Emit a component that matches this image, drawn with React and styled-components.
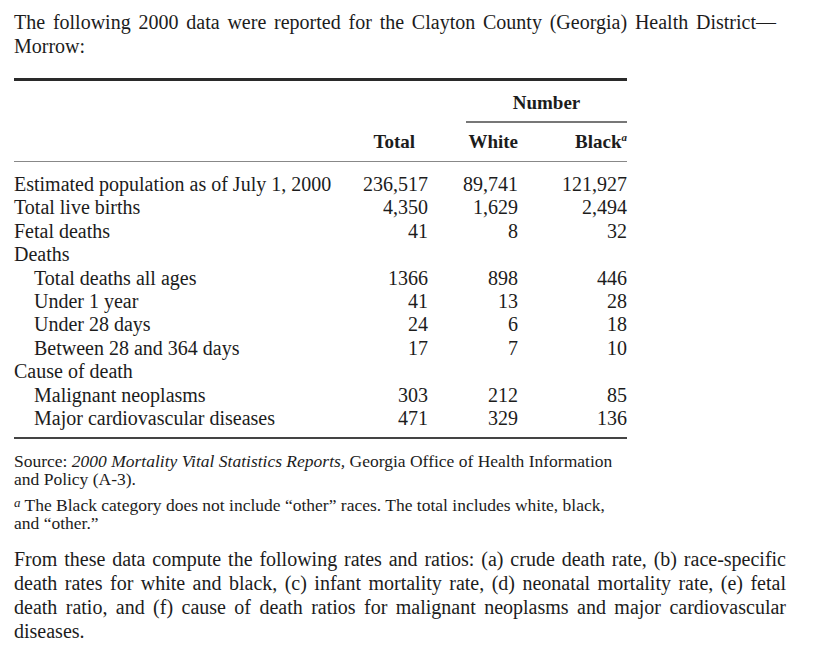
import styled, { createGlobalStyle } from 'styled-components';

const GlobalStyle = createGlobalStyle`
  body {
    margin: 0;
    background: #fff;
    color: #1c1c1c;
    font-family: "Liberation Serif", "Times New Roman", serif;
  }
`

const Page = styled.div`
  padding: 10px 0 0 14px;
  width: 814px;
  box-sizing: border-box;
`

const Paragraph = styled.div`
  width: ${props => props.width}px;
  margin-top: ${props => props.top || 0}px;
  font-size: 20px;
  line-height: 24px;
`

const Line = styled.span`
  display: block;
  text-align: ${props => (props.last ? 'left' : 'justify')};
  text-align-last: ${props => (props.last ? 'left' : 'justify')};
`

const TableBox = styled.div`
  width: 613px;
  margin-top: 20px;
  border-top: 3px solid #2a2a2a;
`

const DataTable = styled.table`
  width: 100%;
  border-collapse: collapse;
  table-layout: fixed;
  font-size: 20px;

  td, th {
    padding: 0;
  }
`

const GroupHead = styled.th`
  font-weight: bold;
  font-size: 19px;
  text-align: center;
`

const GroupLabel = styled.div`
  margin-left: 38px;
  padding: 12px 0 8px 0;
  line-height: 20px;
  border-bottom: 2px solid #777;
`

const ColHead = styled.th`
  font-weight: bold;
  font-size: 19px;
  text-align: right;
  padding: 9px ${props => props.pr || 0}px 9px 0 !important;
  line-height: 20px;
  border-bottom: 1.5px solid #888;
`

const Sup = styled.sup`
  font-size: 11px;
  font-style: italic;
  line-height: 0;
`

const LabelCell = styled.td`
  padding-left: ${props => (props.indent ? 20 : 0)}px !important;
  line-height: 23.4px;
  white-space: nowrap;
`

const NumCell = styled.td`
  text-align: right;
  line-height: 23.4px;
`

const Spacer = styled.tr`
  td { height: ${props => props.h}px; }
`

const BottomRule = styled.div`
  border-top: 2px solid #444;
  margin-top: 7px;
`

const Note = styled.div`
  margin-top: ${props => props.top}px;
  font-size: 17.5px;
  line-height: 18px;
`

const Marker = styled.span`
  font-style: italic;
  font-size: 13px;
  vertical-align: 4px;
  margin-right: 4px;
`

const rows = [
  { label: 'Estimated population as of July 1, 2000', total: '236,517', white: '89,741', black: '121,927' },
  { label: 'Total live births', total: '4,350', white: '1,629', black: '2,494' },
  { label: 'Fetal deaths', total: '41', white: '8', black: '32' },
  { label: 'Deaths' },
  { label: 'Total deaths all ages', indent: true, total: '1366', white: '898', black: '446' },
  { label: 'Under 1 year', indent: true, total: '41', white: '13', black: '28' },
  { label: 'Under 28 days', indent: true, total: '24', white: '6', black: '18' },
  { label: 'Between 28 and 364 days', indent: true, total: '17', white: '7', black: '10' },
  { label: 'Cause of death' },
  { label: 'Malignant neoplasms', indent: true, total: '303', white: '212', black: '85' },
  { label: 'Major cardiovascular diseases', indent: true, total: '471', white: '329', black: '136' },
]

function App() {
  return (
    <Page>
      <GlobalStyle />
      <Paragraph width={762}>
        <Line>The following 2000 data were reported for the Clayton County (Georgia) Health District—</Line>
        <Line last>Morrow:</Line>
      </Paragraph>

      <TableBox>
        <DataTable>
          <colgroup>
            <col style={{ width: 320 }} />
            <col style={{ width: 94 }} />
            <col style={{ width: 90 }} />
            <col style={{ width: 109 }} />
          </colgroup>
          <thead>
            <tr>
              <th />
              <th />
              <GroupHead colSpan={2}><GroupLabel>Number</GroupLabel></GroupHead>
            </tr>
            <tr>
              <ColHead />
              <ColHead pr={13}>Total</ColHead>
              <ColHead>White</ColHead>
              <ColHead>Black<Sup>a</Sup></ColHead>
            </tr>
          </thead>
          <tbody>
            <Spacer h={11}><td colSpan={4} /></Spacer>
            {rows.map(row => (
              <tr key={row.label}>
                <LabelCell indent={row.indent}>{row.label}</LabelCell>
                <NumCell>{row.total}</NumCell>
                <NumCell>{row.white}</NumCell>
                <NumCell>{row.black}</NumCell>
              </tr>
            ))}
          </tbody>
        </DataTable>
        <BottomRule />
      </TableBox>

      <Note top={13}>
        Source: <i>2000 Mortality Vital Statistics Reports,</i> Georgia Office of Health Information<br />
        and Policy (A-3).
      </Note>
      <Note top={6}>
        <Marker>a</Marker>The Black category does not include “other” races. The total includes white, black,<br />
        and “other.”
      </Note>

      <Paragraph width={772} top={15}>
        <Line>From these data compute the following rates and ratios: (a) crude death rate, (b) race-specific</Line>
        <Line>death rates for white and black, (c) infant mortality rate, (d) neonatal mortality rate, (e) fetal</Line>
        <Line>death ratio, and (f) cause of death ratios for malignant neoplasms and major cardiovascular</Line>
        <Line last>diseases.</Line>
      </Paragraph>
    </Page>
  );
}

export default App;
